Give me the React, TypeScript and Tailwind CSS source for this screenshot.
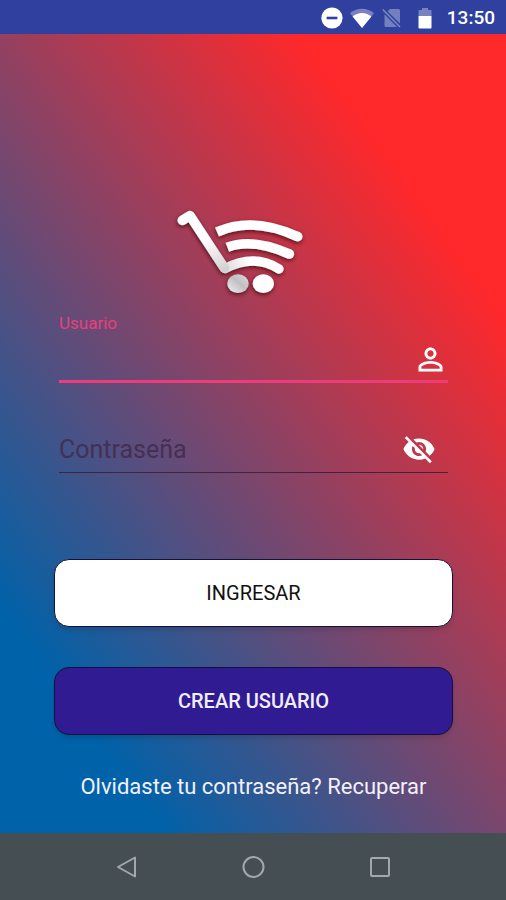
import { useState } from "react";

function StatusBar() {
  return (
    <header className="flex h-[34px] shrink-0 items-center justify-end bg-[#30409f] pt-[2px] pr-[11px] text-white">
      <svg className="h-[22px] w-[22px]" viewBox="0 0 22 22" aria-hidden="true">
        <circle cx="11" cy="11" r="10.6" fill="#fff" />
        <rect x="5.6" y="9.7" width="10.8" height="2.6" fill="#30409f" />
      </svg>
      <svg className="ml-[6px] h-[20px] w-[26px]" viewBox="0 0 26 20" aria-hidden="true">
        <path d="M13 20 1 5.2C4.400 2.400 8.500.8 13 .8s8.600 1.600 12 4.400L13 20Z" fill="#fff" fillOpacity=".35" />
        <path d="M13 20 3.600 8.500C6.200 6.300 9.400 5 13 5s6.800 1.300 9.400 3.500L13 20Z" fill="#fff" />
      </svg>
      <svg className="ml-[7px] h-[20px] w-[20px]" viewBox="0 0 20 20" aria-hidden="true">
        <path d="M8 1h8.500c.8 0 1.500.7 1.500 1.500v13L5.600 3.400 8 1ZM2.500 6.200 15 19H4c-.8 0-1.500-.7-1.500-1.500V6.200Z" fill="#fff" fillOpacity=".33" />
        <path d="M.8 1.500 18 19" stroke="#fff" strokeOpacity=".4" strokeWidth="1.400" />
      </svg>
      <svg className="ml-[16px] h-[22px] w-[14px]" viewBox="0 0 14 22" aria-hidden="true">
        <path d="M4 1h6v2h2.500c.6 0 1 .4 1 1v5H.5V4c0-.6.4-1 1-1H4V1Z" fill="#fff" fillOpacity=".35" />
        <path d="M.5 9h13v11.500c0 .6-.4 1-1 1h-11c-.6 0-1-.4-1-1V9Z" fill="#fff" />
      </svg>
      <time className="ml-[15px] text-[19px] leading-[24px] font-medium">13:50</time>
    </header>
  );
}

function Logo() {
  return (
    <svg
      className="mx-auto block h-[105px] w-[176px]"
      viewBox="3 0 528 315"
      fill="none"
      stroke="#fff"
      strokeWidth="26"
      role="img"
      aria-label="Carrito"
    >
      <defs>
        <linearGradient id="handle" gradientUnits="userSpaceOnUse" x1="110" y1="120" x2="165" y2="225">
          <stop offset="0" stopColor="#fff" />
          <stop offset="1" stopColor="#cfcfcf" />
        </linearGradient>
        <linearGradient id="basket" gradientUnits="userSpaceOnUse" x1="175" y1="210" x2="255" y2="180">
          <stop offset="0" stopColor="#dadada" />
          <stop offset="1" stopColor="#fff" />
        </linearGradient>
        <linearGradient id="wheel" x1="0" y1="1" x2="1" y2="0">
          <stop offset="0" stopColor="#f2f2f2" />
          <stop offset=".55" stopColor="#c0c0c0" />
          <stop offset="1" stopColor="#dcdcdc" />
        </linearGradient>
        <filter id="shade" x="-10%" y="-10%" width="125%" height="130%">
          <feDropShadow dx="-1" dy="5" stdDeviation="6" floodColor="#300" floodOpacity=".75" />
        </filter>
      </defs>
      <g filter="url(#shade)">
        <path d="M156 96Q263 48 398 110" strokeWidth="29" />
        <circle cx="398" cy="110" r="14.500" fill="#fff" stroke="none" />
        <path d="M187 142Q262 113 373 162" strokeWidth="29" />
        <circle cx="373" cy="162" r="14.500" fill="#fff" stroke="none" />
        <path d="M180 206Q268 160 342 207" stroke="url(#basket)" strokeWidth="28" strokeLinecap="round" />
        <path d="M52 61 75 47 178 204" stroke="url(#handle)" strokeWidth="29" strokeLinecap="round" strokeLinejoin="round" />
        <ellipse cx="219" cy="251" rx="32" ry="28" fill="url(#wheel)" stroke="none" />
        <ellipse cx="295" cy="251" rx="32" ry="28" fill="#fff" stroke="none" />
      </g>
    </svg>
  );
}

function LoginForm() {
  const [visible, setVisible] = useState(false);
  return (
    <form className="flex flex-col" onSubmit={(e) => e.preventDefault()}>
      <div className="mt-[8px] flex flex-col px-[5px]">
        <label htmlFor="user" className="text-[17px] leading-[20px] text-[#e8407d]">
          Usuario
        </label>
        <div className="flex h-[50px] items-center border-b-3 border-[#ec3c7c]">
          <input id="user" type="text" className="h-full min-w-0 flex-1 bg-transparent text-[25px] text-white outline-none" />
          <svg className="mt-[6px] mr-[4px] h-[27px] w-[27px]" viewBox="3 3 18 18" fill="#fff" aria-hidden="true">
            <path d="M12 5.900c1.160 0 2.100.94 2.100 2.100s-.94 2.100-2.100 2.100S9.900 9.160 9.900 8s.94-2.100 2.100-2.100m0 9c2.970 0 6.100 1.460 6.100 2.100v1.100H5.900V17c0-.64 3.130-2.100 6.100-2.100M12 4C9.790 4 8 5.790 8 8s1.790 4 4 4 4-1.790 4-4-1.790-4-4-4zm0 9c-2.670 0-8 1.340-8 4v3h16v-3c0-2.660-5.330-4-8-4z" />
          </svg>
        </div>
        <div className="mt-[43px] flex h-[47px] items-center border-b border-[#41223f]">
          <input
            id="password"
            type={visible ? "text" : "password"}
            aria-label="Contraseña"
            placeholder="Contraseña"
            className="h-full min-w-0 flex-1 bg-transparent text-[25px] text-white outline-none placeholder:text-[#452f54]"
          />
          <button type="button" aria-label="Mostrar contraseña" className="mr-[12px]" onClick={() => setVisible(!visible)}>
            <svg className="block h-[34px] w-[34px]" viewBox="0 0 24 24" fill="#fff" aria-hidden="true">
              <path d="M12 7c2.760 0 5 2.240 5 5 0 .65-.13 1.260-.36 1.830l2.920 2.920c1.510-1.260 2.700-2.890 3.430-4.750-1.730-4.390-6-7.500-11-7.500-1.400 0-2.740.25-3.980.7l2.160 2.160C10.740 7.130 11.350 7 12 7zM2 4.270l2.280 2.280.46.46C3.080 8.300 1.780 10.020 1 12c1.730 4.390 6 7.500 11 7.500 1.550 0 3.030-.3 4.380-.84l.42.42L19.730 22 21 20.730 3.270 3 2 4.270zM7.530 9.800l1.550 1.550c-.05.21-.08.43-.08.65 0 1.660 1.340 3 3 3 .22 0 .44-.03.65-.08l1.550 1.550c-.67.33-1.410.53-2.200.53-2.760 0-5-2.240-5-5 0-.79.2-1.530.53-2.200zm4.310-.78 3.150 3.150.02-.16c0-1.660-1.340-3-3-3l-.17.01z" />
            </svg>
          </button>
        </div>
      </div>
      <button
        type="submit"
        className="mt-[86px] h-[68px] rounded-[15px] border border-[#17103c] bg-white text-[20px] font-normal text-[#111] shadow-md"
      >
        INGRESAR
      </button>
      <button
        type="button"
        className="mt-[40px] h-[68px] rounded-[15px] border border-[#17103c] bg-[#311b92] text-[20px] font-medium text-[#f1eeff] shadow-md"
      >
        CREAR USUARIO
      </button>
    </form>
  );
}

function NavigationBar() {
  return (
    <nav className="grid h-[67px] shrink-0 grid-cols-3 items-center justify-items-center bg-[#454e53] px-[63px]">
      <button type="button" aria-label="Atrás">
        <svg className="block h-[24px] w-[24px]" viewBox="0 0 24 24" fill="none" stroke="#a3a8aa" strokeWidth="2" strokeLinejoin="round">
          <path d="M21 2.500v19L4 12Z" />
        </svg>
      </button>
      <button type="button" aria-label="Inicio">
        <svg className="block h-[24px] w-[24px]" viewBox="0 0 24 24" fill="none" stroke="#a3a8aa" strokeWidth="2">
          <circle cx="12.500" cy="12" r="10" />
        </svg>
      </button>
      <button type="button" aria-label="Recientes">
        <svg className="block h-[24px] w-[24px]" viewBox="0 0 24 24" fill="none" stroke="#a3a8aa" strokeWidth="2">
          <rect x="3" y="3" width="18" height="18" rx="1" />
        </svg>
      </button>
    </nav>
  );
}

export default function App() {
  return (
    <div className="flex min-h-screen flex-col font-['Roboto',sans-serif]">
      <StatusBar />
      <main className="flex flex-1 flex-col bg-[linear-gradient(54deg,#0062a9_15%,#ff282b_81%)] pt-[166px] pr-[53px] pl-[54px]">
        <Logo />
        <LoginForm />
        <a href="#recuperar" className="mt-[37px] text-center text-[22px] leading-[30px] text-[#f3f0fb]">
          Olvidaste tu contraseña? Recuperar
        </a>
      </main>
      <NavigationBar />
    </div>
  );
}
